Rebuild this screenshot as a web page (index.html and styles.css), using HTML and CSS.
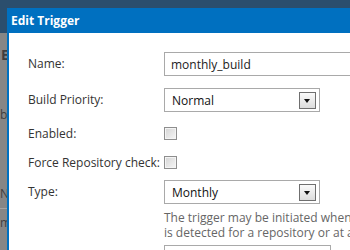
FILE: index.html
```html
<!DOCTYPE html>
<html lang="en">

<head>
    <meta charset="UTF-8">
    <meta name="viewport" content="width=device-width, initial-scale=1.0">
    <title>Edit Trigger</title>
    <link rel="stylesheet" href="styles.css">
</head>

<body>
    <div class="page">
        <div class="page-header"></div>
        <div class="page-content">
            <h3 class="page-title">Edit</h3>
            <p class="page-text">build triggers</p>
            <table class="page-table">
                <tr>
                    <th>Name</th>
                </tr>
                <tr>
                    <td>monthly</td>
                </tr>
            </table>
        </div>
    </div>

    <div class="dialog">
        <div class="dialog-title">Edit Trigger</div>
        <div class="dialog-body">
            <div class="row">
                <label class="label">Name:</label>
                <input class="text-input" type="text" value="monthly_build">
            </div>
            <div class="row row-select">
                <label class="label">Build Priority:</label>
                <div class="select">
                    <span>Normal</span>
                    <span class="select-button"></span>
                </div>
            </div>
            <div class="row row-check">
                <label class="label">Enabled:</label>
                <span class="checkbox"></span>
            </div>
            <div class="row row-check row-force">
                <label class="label">Force Repository check:</label>
                <span class="checkbox"></span>
            </div>
            <div class="row row-type">
                <label class="label">Type:</label>
                <div class="select">
                    <span>Monthly</span>
                    <span class="select-button"></span>
                </div>
            </div>
            <p class="help">The trigger may be initiated when a change<br>is detected for a repository or at a specific time.</p>
            <input class="text-input day-input" type="text" value="">
        </div>
    </div>
</body>

</html>
```

FILE: styles.css
```css
body {
    margin: 0;
    font-family: "Open Sans", "Noto Sans", sans-serif;
    font-size: 12px;
    background: #868686;
    overflow: hidden;
}

.page-header {
    height: 33px;
    background: #2b4e6d;
}

.page-content {
    background: #868686;
    color: #3e3e3e;
    height: 217px;
    overflow: hidden;
}

.page-title {
    margin: 0;
    padding: 12px 0 0 1px;
    font-size: 14px;
}

.page-text {
    margin: 42px 0 0 0;
}

.page-table {
    margin-top: 62px;
    border-collapse: collapse;
    width: 7px;
}

.page-table th {
    text-align: left;
    font-weight: normal;
    padding: 0 0 6px 0;
    border-bottom: 1px solid #a4a4a4;
}

.page-table td {
    padding: 5px 0 0 0;
}

.dialog {
    position: absolute;
    left: 7px;
    top: 8px;
    width: 420px;
    height: 260px;
    background: #fff;
    border: 2px solid #0070c0;
    border-top: 0;
}

.dialog-title {
    height: 25px;
    line-height: 25px;
    padding-left: 2px;
    background: #0070c0;
    color: #fff;
    font-weight: bold;
    font-size: 12px;
}

.dialog-body {
    padding: 19px 0 0 19px;
    color: #333;
}

.row {
    display: flex;
    align-items: center;
    height: 24px;
}

.row-select {
    margin-top: 12px;
}

.row-check {
    height: 13px;
    margin-top: 15px;
}

.row-force {
    margin-top: 16px;
}

.row-type {
    margin-top: 11px;
}

.label {
    width: 136px;
    flex: none;
    line-height: 16px;
}

.text-input {
    box-sizing: border-box;
    width: 250px;
    height: 24px;
    margin: 0;
    padding: 0 6px;
    border: 1px solid #a9a9a9;
    font-family: inherit;
    font-size: 12px;
    color: #222;
    outline: none;
}

.select {
    box-sizing: border-box;
    width: 156px;
    height: 24px;
    border: 1px solid #a9a9a9;
    display: flex;
    align-items: center;
    justify-content: space-between;
    padding: 0 3px 0 7px;
    color: #111;
}

.select-button {
    box-sizing: border-box;
    width: 17px;
    height: 17px;
    border: 1px solid #6f6f6f;
    background: linear-gradient(#fafafa, #dcdcdc);
    position: relative;
}

.select-button::after {
    content: "";
    position: absolute;
    left: 4px;
    top: 6px;
    border-left: 3.5px solid transparent;
    border-right: 3.5px solid transparent;
    border-top: 4px solid #111;
}

.checkbox {
    box-sizing: border-box;
    width: 13px;
    height: 13px;
    border: 1px solid #8e8e8e;
    background: linear-gradient(135deg, #d4d4d4, #f6f6f6);
    box-shadow: inset 0 0 0 1px #f4f4f4;
}

.help {
    margin: 6px 0 0 136px;
    line-height: 15px;
    color: #666;
    white-space: nowrap;
}

.day-input {
    margin: 5px 0 0 136px;
    width: 167px;
}
```
